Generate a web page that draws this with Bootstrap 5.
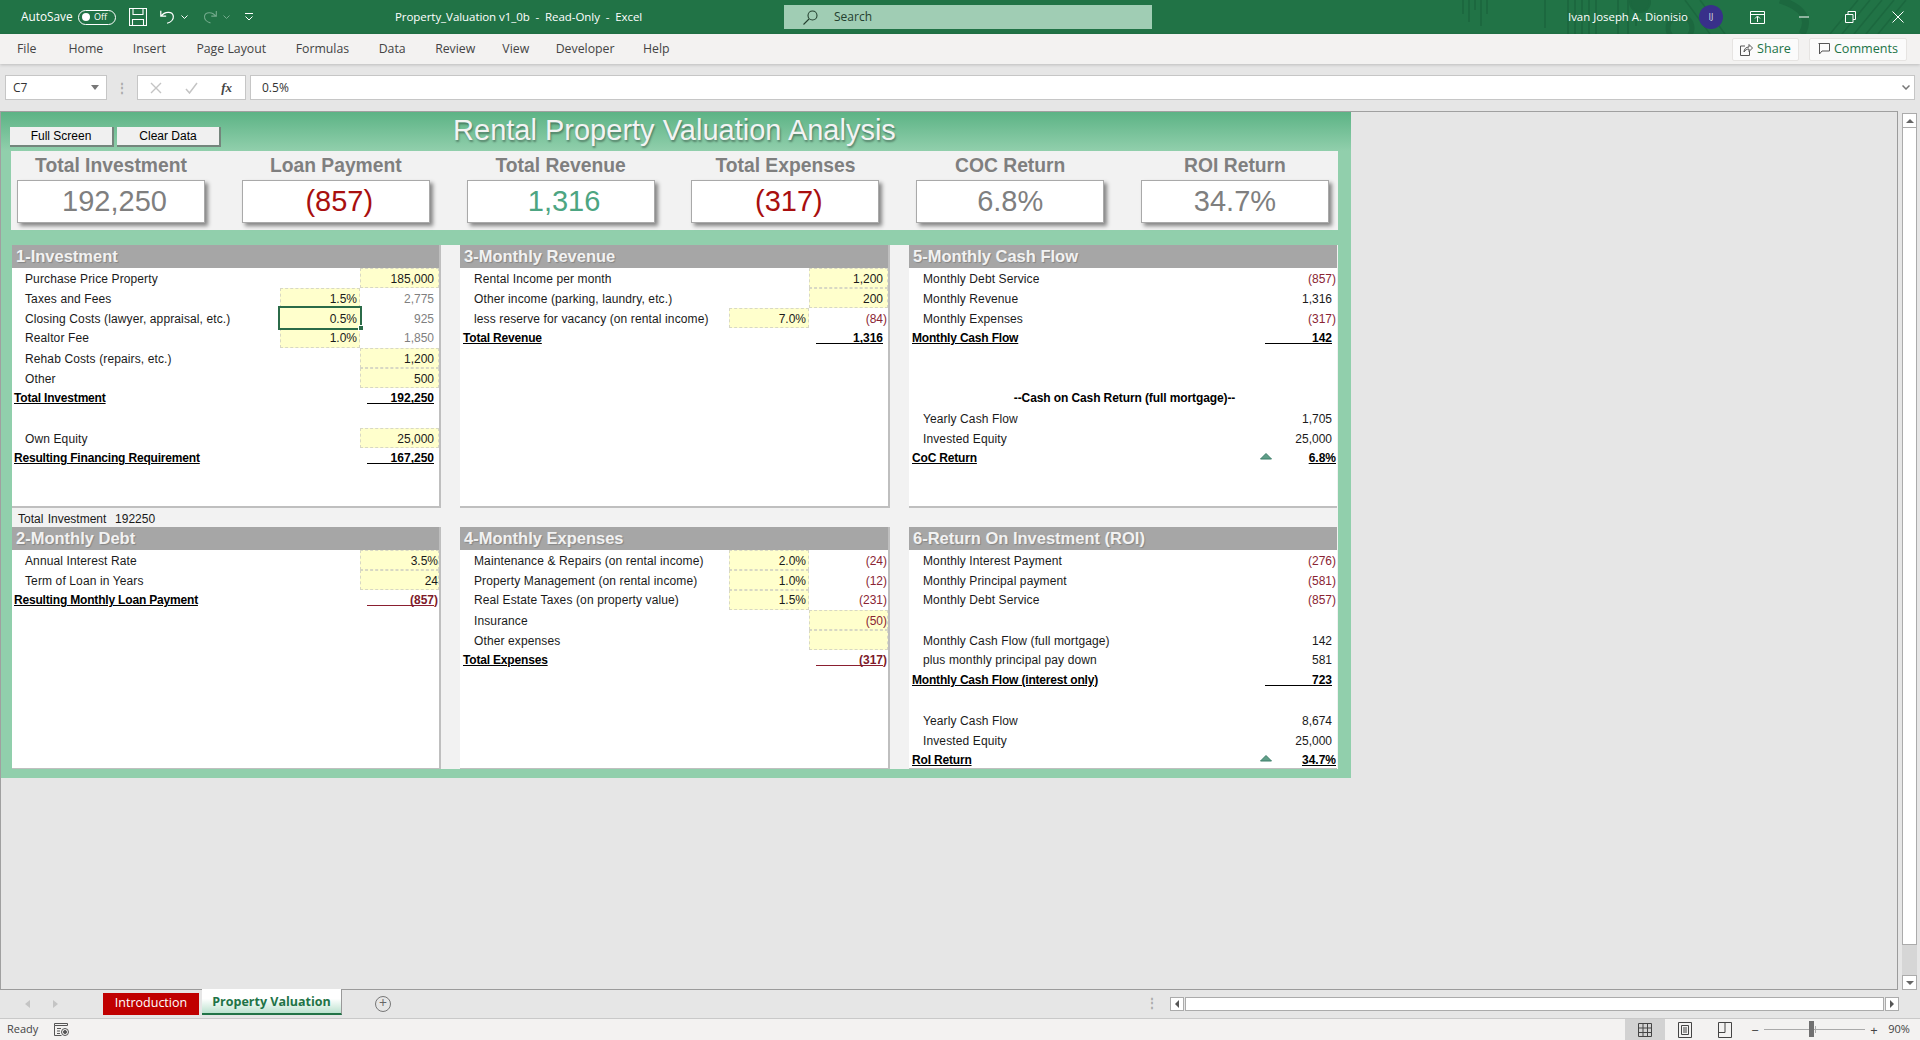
<!DOCTYPE html>
<html lang="en">
<head>
<meta charset="UTF-8">
<title>Property_Valuation v1_0b - Read-Only - Excel</title>
<link href="https://cdn.jsdelivr.net/npm/bootstrap@5.3.0/dist/css/bootstrap.min.css" rel="stylesheet">
<style>
    html, body { height: 100%; overflow: hidden; }
    body { background: #e6e6e6; font-family: "Open Sans", "Liberation Sans", sans-serif; font-size: 12px; color: #333; }
    .app { height: 1040px; }

    /* title bar */
    .tbar { height: 34px; background: #217346; color: #fff; position: relative; flex: none; }
    .tbar-art { position: absolute; left: 1450px; top: 0; }
    .tleft { width: 395px; padding-left: 21px; flex: none; position: relative; }
    .autosave { width: 50px; white-space: nowrap; font-size: 11.8px; }
    .tog { width: 38px; height: 15px; border: 1.5px solid #fff; border-radius: 8px; margin-left: 7px; font-size: 9px; line-height: 12px; gap: 4px; padding-left: 3px; }
    .tog i { width: 8px; height: 8px; background: #fff; border-radius: 50%; display: block; }
    .q-save { margin-left: 13px; }
    .q-undo { margin-left: 12px; }
    .q-care { margin-left: 5px; }
    .q-redo { margin-left: 14px; }
    .q-cust { margin-left: 15px; }
    .tname { width: 389px; flex: none; white-space: pre; position: relative; font-size: 11.5px; letter-spacing: -.06px; }
    .tsearch { width: 368px; height: 24px; background: #a0cdb4; color: #24402f; flex: none; padding-left: 19px; gap: 16px; position: relative; }
    .tright { flex: 1; padding-left: 416px; position: relative; white-space: nowrap; font-size: 11.4px; }
    .avatar { width: 24px; height: 24px; border-radius: 50%; background: #38308a; font-size: 9px; margin-left: 11px; color: #ddd; }
    .w-rib { margin-left: 27px; }
    .w-min { margin-left: 34px; }
    .w-max { margin-left: 36px; }
    .w-cls { margin-left: 36px; }

    /* ribbon */
    .rib { height: 30px; background: #f3f2f1; flex: none; box-shadow: 0 1px 3px rgba(0,0,0,.18); position: relative; }
    .rib .nav { padding: 1px 0 0 17px; gap: 29.500px; }
    .rib .nav-link { padding: 0; color: #444; font-size: 12.3px; }
    .rib .nav-link:nth-child(2) { margin-left: 2.500px; }
    .rib .nav-link:nth-child(4) { margin-left: 1px; }
    .rib .nav-link:nth-child(8) { margin-left: -2.500px; }
    .rib .nav-link:nth-child(9) { margin-left: -3px; }
    .rib .nav-link:nth-child(10) { margin-left: -1px; }
    .rbtn { height: 23px; background: #fbfbfb; border: 1px solid #e6e4e2; border-radius: 2px; color: #217346; font-size: 12.6px; padding: 0; gap: 4px; }
    .rbtn:hover { color: #217346; }
    .rshare { width: 67px; }
    .rcomm { width: 98px; margin: 0 13px 0 10px; }

    /* formula bar */
    .fbar { height: 47px; flex: none; padding: 11px 5px 11px 5px; }
    .fbox { height: 25px; background: #fff; border: 1px solid #c6c6c6; }
    .fname { width: 102px; padding: 0 7px; font-size: 12px; flex: none; }
    .fdots { width: 30px; text-align: center; color: #aaa; font-weight: 700; line-height: 25px; flex: none; }
    .ffx { width: 109px; flex: none; padding: 0 13px 0 12px; margin-right: 4px; }
    .ffx em { font-family: "Liberation Serif", serif; font-size: 13px; color: #444; font-weight: 700; }
    .finput { flex: 1; padding: 0 4px 0 11px; }

    /* sheet area */
    .swrap { flex: 1; min-height: 0; }
    .smain { width: 1898px; border: 1px solid #a0a0a0; border-bottom: 1px solid #9b9b9b; border-right: 1px solid #9b9b9b; flex: none; }
    .vbar { width: 15px; margin: 2px 0 0 4px; flex: none; }
    .sbtn { height: 15px; background: #fff; border: 1px solid #ababab; flex: none; }
    .sthumb { background: #fff; border: 1px solid #ababab; border-top: 0; }
    .strack { height: 30px; background: #d6d6d6; flex: none; }

    /* dashboard, spreadsheet font */
    .dash { width: 1350px; height: 666px; padding: 0 13px 0 10px; background: linear-gradient(#5cb385, #91cfac 39px); font-family: "Liberation Sans", Arial, sans-serif; color: #1a1a1a; }
    .dhead { height: 39px; display: grid; grid-template-columns: 1fr auto 1fr; }
    .dtitle { font-size: 29px; line-height: 36px; color: #f3f3f3; text-shadow: 1px 2px 2px rgba(0,0,0,.35); white-space: nowrap; }
    .xbtn { width: 104px; height: 20px; margin-top: 15px; padding: 0; border-radius: 0; font-size: 12px; line-height: 16px; background: #f0f0f0; color: #000; border: 0; border-right: 2px solid #74857c; border-bottom: 2px solid #74857c; }
    .xbtn:first-child { margin-left: -1px; }
    .xbtn + .xbtn { margin-left: 3px; }
    .kpis { height: 79px; background: #f2f2f2; padding: 0 9px 0 6px; }
    .kpi { width: 188px; text-align: center; }
    .kpi-label { font-size: 19.300px; font-weight: 700; line-height: 30px; color: #7f7f7f; white-space: nowrap; height: 29px; }
    .kpi-box { height: 43px; background: #fff; border: 1px solid #a9a9a9; box-shadow: 3px 3px 4px rgba(0,0,0,.45); font-size: 29px; line-height: 41px; color: #7f7f7f; }
    .kshift { padding-left: 7px; }
    .kred { color: #a80f0f; }
    .kgreen { color: #4da582; }

    .dbody { height: 524px; margin: 15px 0 0 1px; background: #f2f2f2; display: grid; grid-template-columns: 429px 430px 428px; column-gap: 19px; }
    .blk { background: #fff; border-right: 2px solid #bfbfbf; border-bottom: 2px solid #bfbfbf; }
    .blk-top { height: 263px; }
    .blk-low { height: 242px; border-bottom-width: 1px; overflow: hidden; }
    .blk-last { border-right: 0; }
    .blk-gap { height: 19px; padding: 4px 0 0 6px; line-height: 14px; font-size: 12px; word-spacing: 1px; }
    .shead { height: 23px; background: #a6a6a6; color: #f2f2f2; font-size: 16.500px; font-weight: 700; line-height: 22px; padding-left: 4px; text-shadow: 1px 1px 1px rgba(0,0,0,.2); white-space: nowrap; }

    .xrow { height: 20px; display: grid; grid-template-columns: 1fr 80px 79px; font-size: 12px; line-height: 14px; position: relative; }
    .xrow > * { padding-top: 4px; white-space: nowrap; }
    .xrow.up > * { padding-top: 3px; }
    .xl { padding-left: 13px; letter-spacing: .12px; }
    .xl.tl { padding-left: 2px; font-weight: 700; text-decoration: underline; color: #000; letter-spacing: -.18px; }
    .xl.ctr { grid-column: 1 / 4; padding-left: 0; text-align: center; font-weight: 700; color: #000; letter-spacing: -.1px; }
    .cmore .xl { padding-left: 14px; }
    .cmore .xl.tl { padding-left: 3px; }
    .cmore .xl.ctr { padding-left: 3px; }
    .xp { text-align: right; padding-right: 3px; }
    .xv { text-align: right; padding-right: 5px; }
    .xv.ng { padding-right: 1px; }
    .xv.arw { display: flex; justify-content: space-between; padding-left: 2px; font-weight: 700; text-decoration: underline; color: #000; }
    .arw svg { margin-top: 2px; }
    .inp { background: #ffffcc; outline: 1px dashed #d8d8c4; outline-offset: -1px; }
    .gry { color: #7f7f7f; }
    .red { color: #8a2433; }
    .tot { display: inline-block; width: 67px; height: 13px; font-weight: 700; color: #000; border-bottom: 1px solid #000; text-align: right; }
    .tot.rd { color: #7d1a2a; border-color: #8a1f30; }
    .hang { margin-right: -4px; }
    .sel { outline: 2px solid #2b6b48; outline-offset: 0; position: relative; z-index: 2; }
    .sel b { position: absolute; right: -4px; bottom: -3px; width: 6px; height: 6px; background: #2b6b48; border: 1px solid #fff; }

    /* sheet tabs */
    .tabs { height: 28px; flex: none; position: relative; }
    .tnav { width: 103px; padding-left: 25px; gap: 23px; flex: none; }
    .stab { height: 22px; margin-top: 3px; width: 96px; background: #c00000; color: #fff; font-size: 12.5px; line-height: 20px; text-align: center; }
    .stab.on { width: 140px; height: 26px; margin: -1px 0 0 3px; line-height: 26px; background: linear-gradient(#fff 40%, #bce2cf); color: #217346; font-weight: 700; border-right: 1px solid #999; border-bottom: 2px solid #217346; }
    .plus { margin-left: 33px; width: 16px; height: 16px; border: 1.5px solid #777; border-radius: 50%; color: #666; font-size: 14px; line-height: 12px; margin-top: 6px; text-align: center; }
    .hgrip { margin-left: auto; margin-right: 12px; color: #aaa; font-weight: 700; line-height: 26px; }
    .hbar { width: 729px; height: 14px; margin: 7px 21px 0 0; }
    .hbtn { width: 14px; background: #fff; border: 1px solid #ababab; flex: none; }
    .hthumb { flex: 1; background: #fff; border: 1px solid #ababab; margin: 0 1px; }

    /* status bar */
    .stat { height: 22px; flex: none; background: #f3f2f1; border-top: 1px solid #c9c9c9; padding: 0 0 1px 7px; color: #444; font-size: 11px; }
    .stat-r { margin-bottom: -1px; }
    .vw { width: 40px; height: 21px; }
    .vw.on { background: #d2d2d2; }
    .zbtn { width: 8px; text-align: center; font-size: 13px; line-height: 14px; }
    .zminus { margin-left: 6px; }
    .slider { width: 101px; height: 1px; background: #aaa; margin: 0 5px; position: relative; }
    .slider i { position: absolute; left: 45px; top: -8px; width: 5px; height: 16px; background: #707070; }
    .slider u { position: absolute; left: 51px; top: -3px; width: 1px; height: 7px; background: #aaa; }
    .zm { width: 42px; text-align: center; font-size: 11px; }
</style>
</head>
<body>
<div class="app d-flex flex-column">

    <div class="tbar d-flex align-items-center">
        <svg class="tbar-art" width="470" height="34" fill="none" stroke="#1c683f" stroke-width="2">
            <path d="M13 0v14M19 0v22M25 0v10M31 0v26M37 0v14M95 0v28M118 0v34M125 0v34M132 0v34M139 0v34M146 0v34M168 0v34M178 0v34M186 0v26"/>
            <circle cx="190" cy="2" r="10" fill="#1c683f"/>
            <circle cx="230" cy="28" r="12" stroke-width="5"/>
            <path d="M235 0l25 34M250 0l25 34M380 34l28-34M392 34l28-34M404 34l28-34M416 34l28-34M428 34l28-34" stroke-width="1.5"/>
            <path d="M330 0c25 8 30 20 22 34" stroke-width="7"/>
        </svg>
        <div class="tleft d-flex align-items-center">
            <span class="autosave">AutoSave</span>
            <span class="tog d-flex align-items-center"><i></i>Off</span>
            <svg class="q-save" width="18" height="18" viewBox="0 0 18 18" fill="none" stroke="#fff" stroke-width="1.1"><path d="M.5.500h17v17H.5zM4 .5v6h10v-6M3.500 17.500v-6h11v6"/></svg>
            <svg class="q-undo" width="17" height="18" viewBox="0 0 19 18" fill="none" stroke="#fff" stroke-width="1.4"><path d="M2 2v6h6M2.500 8C6 3 15 2 16 8c.5 4-3 7-7 8"/></svg>
            <svg class="q-care" width="7" height="4" viewBox="0 0 7 4" fill="none" stroke="#fff"><path d="M.5.500l3 3 3-3"/></svg>
            <svg class="q-redo" width="16" height="18" viewBox="0 0 19 18" fill="none" stroke="#74ab8d" stroke-width="1.300"><path d="M17 2v6h-6M16.500 8C13 3 4 2 3 8c-.5 4 3 7 7 8"/></svg>
            <svg class="q-care" width="7" height="4" viewBox="0 0 7 4" fill="none" stroke="#74ab8d"><path d="M.5.500l3 3 3-3"/></svg>
            <svg class="q-cust" width="8" height="8" viewBox="0 0 8 8" fill="none" stroke="#fff"><path d="M0 .5h8M.5 3.500l3.500 3.500 3.500-3.500"/></svg>
        </div>
        <div class="tname">Property_Valuation v1_0b  -  Read-Only  -  Excel</div>
        <div class="tsearch d-flex align-items-center">
            <svg width="15" height="15" viewBox="0 0 15 15" fill="none" stroke="#24402f" stroke-width="1.1"><circle cx="9.500" cy="5.500" r="4.500"/><path d="M6 9l-5.500 5.500"/></svg>
            <span>Search</span>
        </div>
        <div class="tright d-flex align-items-center">
            <span>Ivan Joseph A. Dionisio</span>
            <span class="avatar d-flex align-items-center justify-content-center">IJ</span>
            <svg class="w-rib" width="15" height="13" viewBox="0 0 15 13" fill="none" stroke="#fff"><path d="M.5.500h14v12H.5zM.5 3.500h14M7.500 11V5.500M5 7.500l2.500-2.500 2.500 2.500"/></svg>
            <svg class="w-min" width="10" height="2" viewBox="0 0 10 2" stroke="#fff"><path d="M0 1h10"/></svg>
            <svg class="w-max" width="11" height="12" viewBox="0 0 11 12" fill="none" stroke="#fff"><path d="M.5 3.500h7.500v8H.5zM3 3.500v-3h7.500v8H8"/></svg>
            <svg class="w-cls" width="12" height="12" viewBox="0 0 12 12" stroke="#fff"><path d="M.5.500l11 11M11.500.500l-11 11"/></svg>
        </div>
    </div>

    <div class="rib d-flex align-items-center">
        <nav class="nav">
            <a class="nav-link" href="#">File</a>
            <a class="nav-link" href="#">Home</a>
            <a class="nav-link" href="#">Insert</a>
            <a class="nav-link" href="#">Page Layout</a>
            <a class="nav-link" href="#">Formulas</a>
            <a class="nav-link" href="#">Data</a>
            <a class="nav-link" href="#">Review</a>
            <a class="nav-link" href="#">View</a>
            <a class="nav-link" href="#">Developer</a>
            <a class="nav-link" href="#">Help</a>
        </nav>
        <button class="btn rbtn rshare ms-auto d-flex align-items-center justify-content-center">
            <svg width="13" height="13" viewBox="0 0 13 13" fill="none" stroke="#555"><path d="M5 3H.5v9.500h9V8M4 9c0-3 2-5 5-5V1.500l3.500 3.500L9 8.500V6C7 6 5 7 4 9z"/></svg>
            Share
        </button>
        <button class="btn rbtn rcomm d-flex align-items-center justify-content-center">
            <svg width="12" height="12" viewBox="0 0 12 12" fill="none" stroke="#555"><path d="M.5.500h11v7.500H4l-2.500 3V.5"/></svg>
            Comments
        </button>
    </div>

    <div class="fbar d-flex">
        <div class="fbox fname d-flex align-items-center justify-content-between">
            <span>C7</span>
            <svg width="8" height="5" viewBox="0 0 8 5" fill="#777"><path d="M0 0h8L4 5z"/></svg>
        </div>
        <div class="fdots">⋮</div>
        <div class="fbox ffx d-flex align-items-center justify-content-between">
            <svg width="12" height="12" viewBox="0 0 12 12" stroke="#c4c4c4" stroke-width="1.400"><path d="M1 1l10 10M11 1L1 11"/></svg>
            <svg width="13" height="12" viewBox="0 0 13 12" fill="none" stroke="#c4c4c4" stroke-width="1.500"><path d="M1 7l3.500 4L12 1"/></svg>
            <em>fx</em>
        </div>
        <div class="fbox finput d-flex align-items-center justify-content-between">
            <span>0.5%</span>
            <svg width="8" height="5" viewBox="0 0 8 5" fill="none" stroke="#777" stroke-width="1.500"><path d="M.5.500L4 4 7.500.5"/></svg>
        </div>
    </div>

    <div class="swrap d-flex">
        <div class="smain">
            <div class="dash">
                <div class="dhead">
                    <div class="d-flex">
                        <button class="btn xbtn">Full Screen</button>
                        <button class="btn xbtn">Clear Data</button>
                    </div>
                    <div class="dtitle">Rental Property Valuation Analysis</div>
                    <div></div>
                </div>

                <div class="kpis d-flex justify-content-between">
                    <div class="kpi"><div class="kpi-label">Total Investment</div><div class="kpi-box kshift">192,250</div></div>
                    <div class="kpi"><div class="kpi-label">Loan Payment</div><div class="kpi-box kshift kred">(857)</div></div>
                    <div class="kpi"><div class="kpi-label">Total Revenue</div><div class="kpi-box kshift kgreen">1,316</div></div>
                    <div class="kpi"><div class="kpi-label">Total Expenses</div><div class="kpi-box kshift kred">(317)</div></div>
                    <div class="kpi"><div class="kpi-label">COC Return</div><div class="kpi-box">6.8%</div></div>
                    <div class="kpi"><div class="kpi-label">ROI Return</div><div class="kpi-box">34.7%</div></div>
                </div>

                <div class="dbody">
                    <!-- left column -->
                    <div>
                        <div class="blk blk-top">
                            <div class="shead">1-Investment</div>
                            <div class="xrow"><span class="xl">Purchase Price Property</span><span></span><span class="xv inp">185,000</span></div>
                            <div class="xrow"><span class="xl">Taxes and Fees</span><span class="xp inp">1.5%</span><span class="xv gry">2,775</span></div>
                            <div class="xrow"><span class="xl">Closing Costs (lawyer, appraisal, etc.)</span><span class="xp inp sel">0.5%<b></b></span><span class="xv gry">925</span></div>
                            <div class="xrow up"><span class="xl">Realtor Fee</span><span class="xp inp">1.0%</span><span class="xv gry">1,850</span></div>
                            <div class="xrow"><span class="xl">Rehab Costs (repairs, etc.)</span><span></span><span class="xv inp">1,200</span></div>
                            <div class="xrow"><span class="xl">Other</span><span></span><span class="xv inp">500</span></div>
                            <div class="xrow up"><span class="xl tl">Total Investment</span><span></span><span class="xv"><span class="tot">192,250</span></span></div>
                            <div class="xrow"></div>
                            <div class="xrow"><span class="xl">Own Equity</span><span></span><span class="xv inp">25,000</span></div>
                            <div class="xrow up"><span class="xl tl">Resulting Financing Requirement</span><span></span><span class="xv"><span class="tot">167,250</span></span></div>
                        </div>
                        <div class="blk-gap">Total Investment &nbsp;192250</div>
                        <div class="blk blk-low">
                            <div class="shead">2-Monthly Debt</div>
                            <div class="xrow"><span class="xl">Annual Interest Rate</span><span></span><span class="xv ng inp">3.5%</span></div>
                            <div class="xrow"><span class="xl">Term of Loan in Years</span><span></span><span class="xv ng inp">24</span></div>
                            <div class="xrow up"><span class="xl tl">Resulting Monthly Loan Payment</span><span></span><span class="xv"><span class="tot rd"><span class="hang">(857)</span></span></span></div>
                        </div>
                    </div>

                    <!-- middle column -->
                    <div class="cmore">
                        <div class="blk blk-top">
                            <div class="shead">3-Monthly Revenue</div>
                            <div class="xrow"><span class="xl">Rental Income per month</span><span></span><span class="xv inp">1,200</span></div>
                            <div class="xrow"><span class="xl">Other income (parking, laundry, etc.)</span><span></span><span class="xv inp">200</span></div>
                            <div class="xrow"><span class="xl">less reserve for vacancy (on rental income)</span><span class="xp inp">7.0%</span><span class="xv ng red">(84)</span></div>
                            <div class="xrow up"><span class="xl tl">Total Revenue</span><span></span><span class="xv"><span class="tot">1,316</span></span></div>
                        </div>
                        <div class="blk-gap"></div>
                        <div class="blk blk-low">
                            <div class="shead">4-Monthly Expenses</div>
                            <div class="xrow"><span class="xl">Maintenance &amp; Repairs (on rental income)</span><span class="xp inp">2.0%</span><span class="xv ng red">(24)</span></div>
                            <div class="xrow"><span class="xl">Property Management (on rental income)</span><span class="xp inp">1.0%</span><span class="xv ng red">(12)</span></div>
                            <div class="xrow up"><span class="xl">Real Estate Taxes (on property value)</span><span class="xp inp">1.5%</span><span class="xv ng red">(231)</span></div>
                            <div class="xrow"><span class="xl">Insurance</span><span></span><span class="xv ng red inp">(50)</span></div>
                            <div class="xrow"><span class="xl">Other expenses</span><span></span><span class="xv inp"></span></div>
                            <div class="xrow up"><span class="xl tl">Total Expenses</span><span></span><span class="xv"><span class="tot rd"><span class="hang">(317)</span></span></span></div>
                        </div>
                    </div>

                    <!-- right column -->
                    <div class="cmore">
                        <div class="blk blk-top blk-last">
                            <div class="shead">5-Monthly Cash Flow</div>
                            <div class="xrow"><span class="xl">Monthly Debt Service</span><span></span><span class="xv ng red">(857)</span></div>
                            <div class="xrow"><span class="xl">Monthly Revenue</span><span></span><span class="xv">1,316</span></div>
                            <div class="xrow"><span class="xl">Monthly Expenses</span><span></span><span class="xv ng red">(317)</span></div>
                            <div class="xrow up"><span class="xl tl">Monthly Cash Flow</span><span></span><span class="xv"><span class="tot">142</span></span></div>
                            <div class="xrow"></div>
                            <div class="xrow"></div>
                            <div class="xrow up"><span class="xl ctr">--Cash on Cash Return (full mortgage)--</span></div>
                            <div class="xrow"><span class="xl">Yearly Cash Flow</span><span></span><span class="xv">1,705</span></div>
                            <div class="xrow"><span class="xl">Invested Equity</span><span></span><span class="xv">25,000</span></div>
                            <div class="xrow up"><span class="xl tl">CoC Return</span><span></span><span class="xv ng arw"><svg width="12" height="7" viewBox="0 0 12 7"><path d="M6 .5L11.500 6H.5z" fill="#5f9e88" stroke="#3f7f6a"/></svg><span>6.8%</span></span></div>
                        </div>
                        <div class="blk-gap"></div>
                        <div class="blk blk-low blk-last">
                            <div class="shead">6-Return On Investment (ROI)</div>
                            <div class="xrow"><span class="xl">Monthly Interest Payment</span><span></span><span class="xv ng red">(276)</span></div>
                            <div class="xrow"><span class="xl">Monthly Principal payment</span><span></span><span class="xv ng red">(581)</span></div>
                            <div class="xrow up"><span class="xl">Monthly Debt Service</span><span></span><span class="xv ng red">(857)</span></div>
                            <div class="xrow"></div>
                            <div class="xrow"><span class="xl">Monthly Cash Flow (full mortgage)</span><span></span><span class="xv">142</span></div>
                            <div class="xrow up"><span class="xl">plus monthly principal pay down</span><span></span><span class="xv">581</span></div>
                            <div class="xrow up"><span class="xl tl">Monthly Cash Flow (interest only)</span><span></span><span class="xv"><span class="tot">723</span></span></div>
                            <div class="xrow"></div>
                            <div class="xrow"><span class="xl">Yearly Cash Flow</span><span></span><span class="xv">8,674</span></div>
                            <div class="xrow"><span class="xl">Invested Equity</span><span></span><span class="xv">25,000</span></div>
                            <div class="xrow up"><span class="xl tl">RoI Return</span><span></span><span class="xv ng arw"><svg width="12" height="7" viewBox="0 0 12 7"><path d="M6 .5L11.500 6H.5z" fill="#5f9e88" stroke="#3f7f6a"/></svg><span>34.7%</span></span></div>
                        </div>
                    </div>
                </div>
            </div>
        </div>

        <div class="vbar d-flex flex-column">
            <div class="sbtn d-flex align-items-center justify-content-center"><svg width="8" height="4" viewBox="0 0 8 4" fill="#666"><path d="M4 0l4 4H0z"/></svg></div>
            <div class="sthumb flex-grow-1"></div>
            <div class="strack"></div>
            <div class="sbtn d-flex align-items-center justify-content-center"><svg width="8" height="4" viewBox="0 0 8 4" fill="#666"><path d="M4 4L0 0h8z"/></svg></div>
        </div>
    </div>

    <div class="tabs d-flex">
        <div class="tnav d-flex align-items-center">
            <svg width="5" height="8" viewBox="0 0 5 8" fill="#c4c4c4"><path d="M5 0v8L0 4z"/></svg>
            <svg width="5" height="8" viewBox="0 0 5 8" fill="#c4c4c4"><path d="M0 0v8l5-4z"/></svg>
        </div>
        <div class="stab">Introduction</div>
        <div class="stab on">Property Valuation</div>
        <div class="plus">+</div>
        <div class="hgrip">⋮</div>
        <div class="hbar d-flex">
            <div class="hbtn d-flex align-items-center justify-content-center"><svg width="4" height="8" viewBox="0 0 4 8" fill="#555"><path d="M4 0v8L0 4z"/></svg></div>
            <div class="hthumb"></div>
            <div class="hbtn d-flex align-items-center justify-content-center"><svg width="4" height="8" viewBox="0 0 4 8" fill="#555"><path d="M0 0v8l4-4z"/></svg></div>
        </div>
    </div>

    <div class="stat d-flex align-items-center">
        <span>Ready</span>
        <svg class="ms-3" width="15" height="13" viewBox="0 0 15 13" fill="none" stroke="#555"><path d="M.5.500h13v2H.5zM.5 2.500v10h7M3 5.500h4M3 8h3M3 10.500h3"/><circle cx="11" cy="9" r="3.500"/><circle cx="11" cy="9" r="1.500" fill="#555"/></svg>
        <div class="stat-r ms-auto d-flex align-items-center">
            <div class="vw on d-flex align-items-center justify-content-center"><svg width="14" height="14" viewBox="0 0 14 14" fill="none" stroke="#444"><path d="M.5.500h13v13H.5zM.5 5h13M.5 9.500h13M5 .5v13M9.500.5v13"/></svg></div>
            <div class="vw d-flex align-items-center justify-content-center"><svg width="14" height="16" viewBox="0 0 14 16" fill="none" stroke="#444"><path d="M.5.500h13v15H.5zM3.500 3.500h7v9h-7zM5 6h4M5 8h4M5 10h4"/></svg></div>
            <div class="vw d-flex align-items-center justify-content-center"><svg width="14" height="16" viewBox="0 0 14 16" fill="none" stroke="#444"><path d="M.5.500h13v15H.5zM.5 10.500h6.500V.5"/></svg></div>
            <span class="zbtn zminus">−</span>
            <div class="slider"><u></u><i></i></div>
            <span class="zbtn">+</span>
            <span class="zm">90%</span>
        </div>
    </div>
</div>
<script src="https://cdn.jsdelivr.net/npm/bootstrap@5.3.0/dist/js/bootstrap.bundle.min.js"></script>
</body>
</html>
